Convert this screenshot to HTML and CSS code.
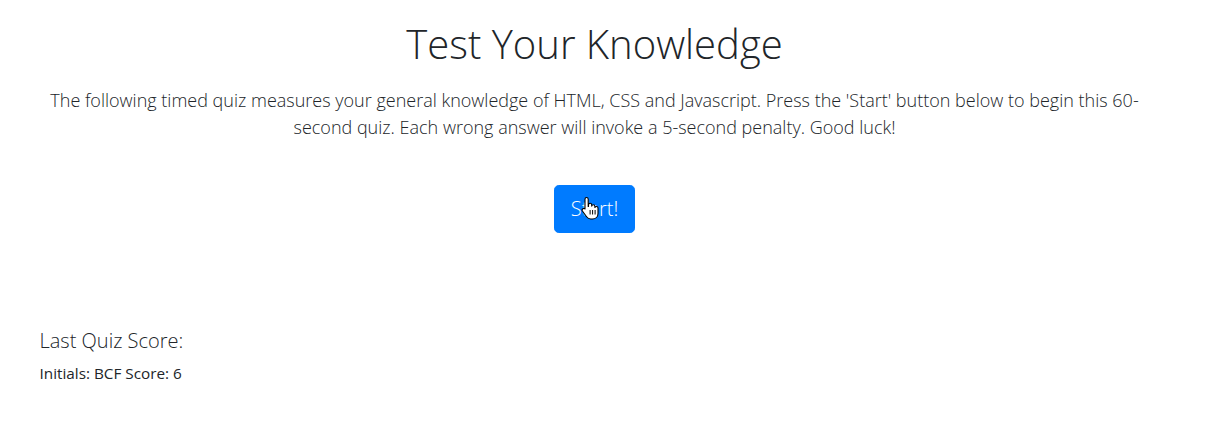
FILE: index.html
```html
<!DOCTYPE html>
<html lang="en">
<head>
<meta charset="utf-8">
<title>Code Quiz</title>
<link rel="stylesheet" href="styles.css">
</head>
<body>
<main class="container">
  <section class="intro">
    <h1 class="title">Test Your Knowledge</h1>
    <p class="lead">The following timed quiz measures your general knowledge of HTML, CSS and Javascript. Press the 'Start' button below to begin this 60-second quiz. Each wrong answer will invoke a 5-second penalty. Good luck!</p>
    <div class="actions">
      <button class="btn">Start!
        <svg class="cursor" width="20" height="24" viewBox="0 0 20 24">
          <path d="M5.5 1.5c1 0 1.7.7 1.7 1.7v7.3l.3-.1V8.9c0-.9.7-1.6 1.6-1.6s1.6.7 1.6 1.6v1.2c.2-.8.9-1.3 1.6-1.3.9 0 1.6.7 1.6 1.6v1.1c.3-.6.9-1 1.5-1 .9 0 1.6.7 1.6 1.6v5.3c0 3.3-2.4 5.6-5.6 5.6H9.7c-1.8 0-3.1-.8-4.1-2.2L1.4 15c-.5-.8-.3-1.8.5-2.3.7-.4 1.6-.3 2.1.3V3.2c0-1 .7-1.7 1.5-1.7z" fill="#fff" stroke="#000" stroke-width="1.1" stroke-linejoin="round"/>
          <path d="M9.1 14v4.5M11.6 14v4.5M14.1 14v4.5" stroke="#000" stroke-width="1" fill="none"/>
        </svg>
      </button>
    </div>
  </section>
  <section class="scores">
    <h4 class="scores-title">Last Quiz Score:</h4>
    <p class="score-line">Initials: BCF Score: 6</p>
  </section>
</main>
</body>
</html>
```
FILE: styles.css
```css
* { box-sizing: border-box; }
html, body { margin: 0; padding: 0; }
body {
  font-family: "Open Sans", "Liberation Sans", sans-serif;
  color: #212529;
  background: #fff;
  padding-right: 16px;
}
.container {
  max-width: 1140px;
  margin: 0 auto;
  padding: 0 15px;
}
.intro {
  text-align: center;
  padding-top: 20px;
}
.title {
  font-size: 40px;
  font-weight: 300;
  line-height: 1.2;
  margin: 0 0 19px;
}
.lead {
  font-size: 18px;
  font-weight: 300;
  line-height: 27px;
  margin: 0;
}
.actions {
  display: flex;
  justify-content: center;
  padding-top: 44px;
}
.btn {
  position: relative;
  font-family: inherit;
  font-size: 20px;
  font-weight: 300;
  line-height: 30px;
  color: #fff;
  background: #007bff;
  border: 1px solid #007bff;
  border-radius: 4.8px;
  padding: 8px 16px;
}
.cursor {
  position: absolute;
  left: 26px;
  top: 10px;
}
.scores {
  padding-top: 96px;
}
.scores-title {
  font-size: 20px;
  font-weight: 300;
  line-height: 1.2;
  margin: 0 0 10px;
}
.score-line {
  font-size: 15.3px;
  font-weight: 400;
  margin: 0;
}
```
